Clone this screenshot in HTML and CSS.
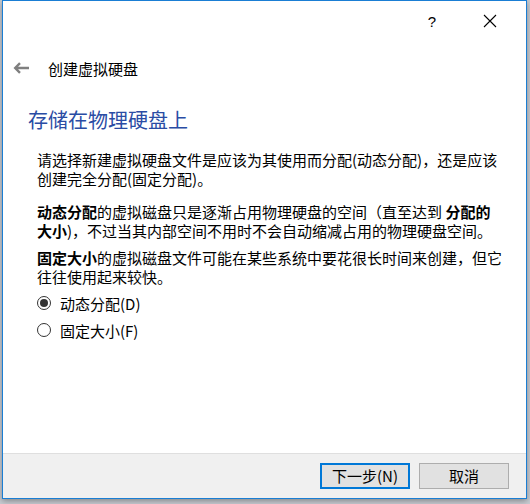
FILE: index.html
```html
<!DOCTYPE html>
<html lang="zh-CN">
<head>
    <meta charset="UTF-8">
    <title>创建虚拟硬盘</title>
    <link rel="stylesheet" href="styles.css">
</head>
<body>
    <div class="window">
        <div class="titlebar">
            <span class="help">?</span>
            <svg class="close" width="14" height="14" viewBox="0 0 14 14">
                <path d="M1 1 L13 13 M13 1 L1 13" stroke="#000" stroke-width="1.1" fill="none"/>
            </svg>
        </div>

        <div class="nav">
            <svg class="back" width="16" height="12" viewBox="0 0 16 12">
                <path d="M16 6 H2.5 M7 1.2 L2.2 6 L7 10.8" stroke="#7f7f7f" stroke-width="2.4" fill="none"/>
            </svg>
            <span class="nav-title">创建虚拟硬盘</span>
        </div>

        <div class="content">
            <h2 class="heading">存储在物理硬盘上</h2>

            <p class="text first">请选择新建虚拟硬盘文件是应该为其使用而分配(动态分配)，还是应该<br>创建完全分配(固定分配)。</p>

            <p class="text second"><b>动态分配</b>的虚拟磁盘只是逐渐占用物理硬盘的空间（直至达到 <b>分配的</b><br><b>大小</b>)，不过当其内部空间不用时不会自动缩减占用的物理硬盘空间。</p>

            <p class="text third"><b>固定大小</b>的虚拟磁盘文件可能在某些系统中要花很长时间来创建，但它<br>往往使用起来较快。</p>

            <div class="options">
                <label class="option"><span class="radio checked"></span>动态分配(D)</label>
                <label class="option"><span class="radio"></span>固定大小(F)</label>
            </div>
        </div>

        <div class="footer">
            <button class="btn primary">下一步(N)</button>
            <button class="btn">取消</button>
        </div>
    </div>
</body>
</html>
```

FILE: styles.css
```css
html, body {
    margin: 0;
    height: 100%;
}
body {
    font-family: "Noto Sans CJK SC", "Liberation Sans", sans-serif;
    background: #c8ccd2;
    color: #000;
    overflow: hidden;
}
.window {
    box-sizing: border-box;
    width: 525px;
    height: 499px;
    margin-left: 2px;
    background: #fff;
    border: 1px solid #1a7ed4;
    display: flex;
    flex-direction: column;
    box-shadow: 0 2px 6px rgba(0, 0, 0, 0.35);
}
.titlebar {
    height: 40px;
    display: flex;
    align-items: center;
    justify-content: flex-end;
    padding-right: 29px;
}
.help {
    font-family: "Liberation Sans", sans-serif;
    font-size: 15px;
    margin-right: 47px;
}
.nav {
    height: 54px;
    display: flex;
    align-items: center;
    padding-left: 10px;
}
.back {
    margin-right: 19px;
}
.nav-title {
    font-size: 15px;
}
.content {
    padding-left: 34px;
}
.heading {
    margin: 11px 0 0 -9px;
    font-size: 20px;
    font-weight: normal;
    line-height: 28px;
    color: #2a4ca4;
}
.text {
    margin: 0;
    font-size: 15px;
    line-height: 19px;
    white-space: nowrap;
}
.first {
    margin-top: 16px;
}
.second {
    margin-top: 14px;
}
.third {
    margin-top: 8px;
}
.options {
    margin-top: 6px;
    display: flex;
    flex-direction: column;
    gap: 5px;
}
.option {
    display: flex;
    align-items: center;
    height: 22px;
    font-size: 15px;
}
.radio {
    box-sizing: border-box;
    width: 14px;
    height: 14px;
    border: 1px solid #333;
    border-radius: 50%;
    margin-right: 9px;
    display: flex;
    align-items: center;
    justify-content: center;
}
.radio.checked::after {
    content: "";
    width: 8px;
    height: 8px;
    border-radius: 50%;
    background: #333;
}
.footer {
    margin-top: auto;
    height: 45px;
    background: #f0f0f0;
    border-top: 1px solid #dfdfdf;
    display: flex;
    justify-content: flex-end;
    align-items: flex-start;
    padding: 9px 17px 0 0;
    gap: 9px;
    box-sizing: border-box;
}
.btn {
    box-sizing: border-box;
    width: 90px;
    height: 26px;
    background: #e1e1e1;
    border: 1px solid #adadad;
    font-family: "Noto Sans CJK SC", sans-serif;
    font-size: 15px;
    padding: 0;
    line-height: 22px;
}
.btn.primary {
    border: 2px solid #0078d7;
}
```
